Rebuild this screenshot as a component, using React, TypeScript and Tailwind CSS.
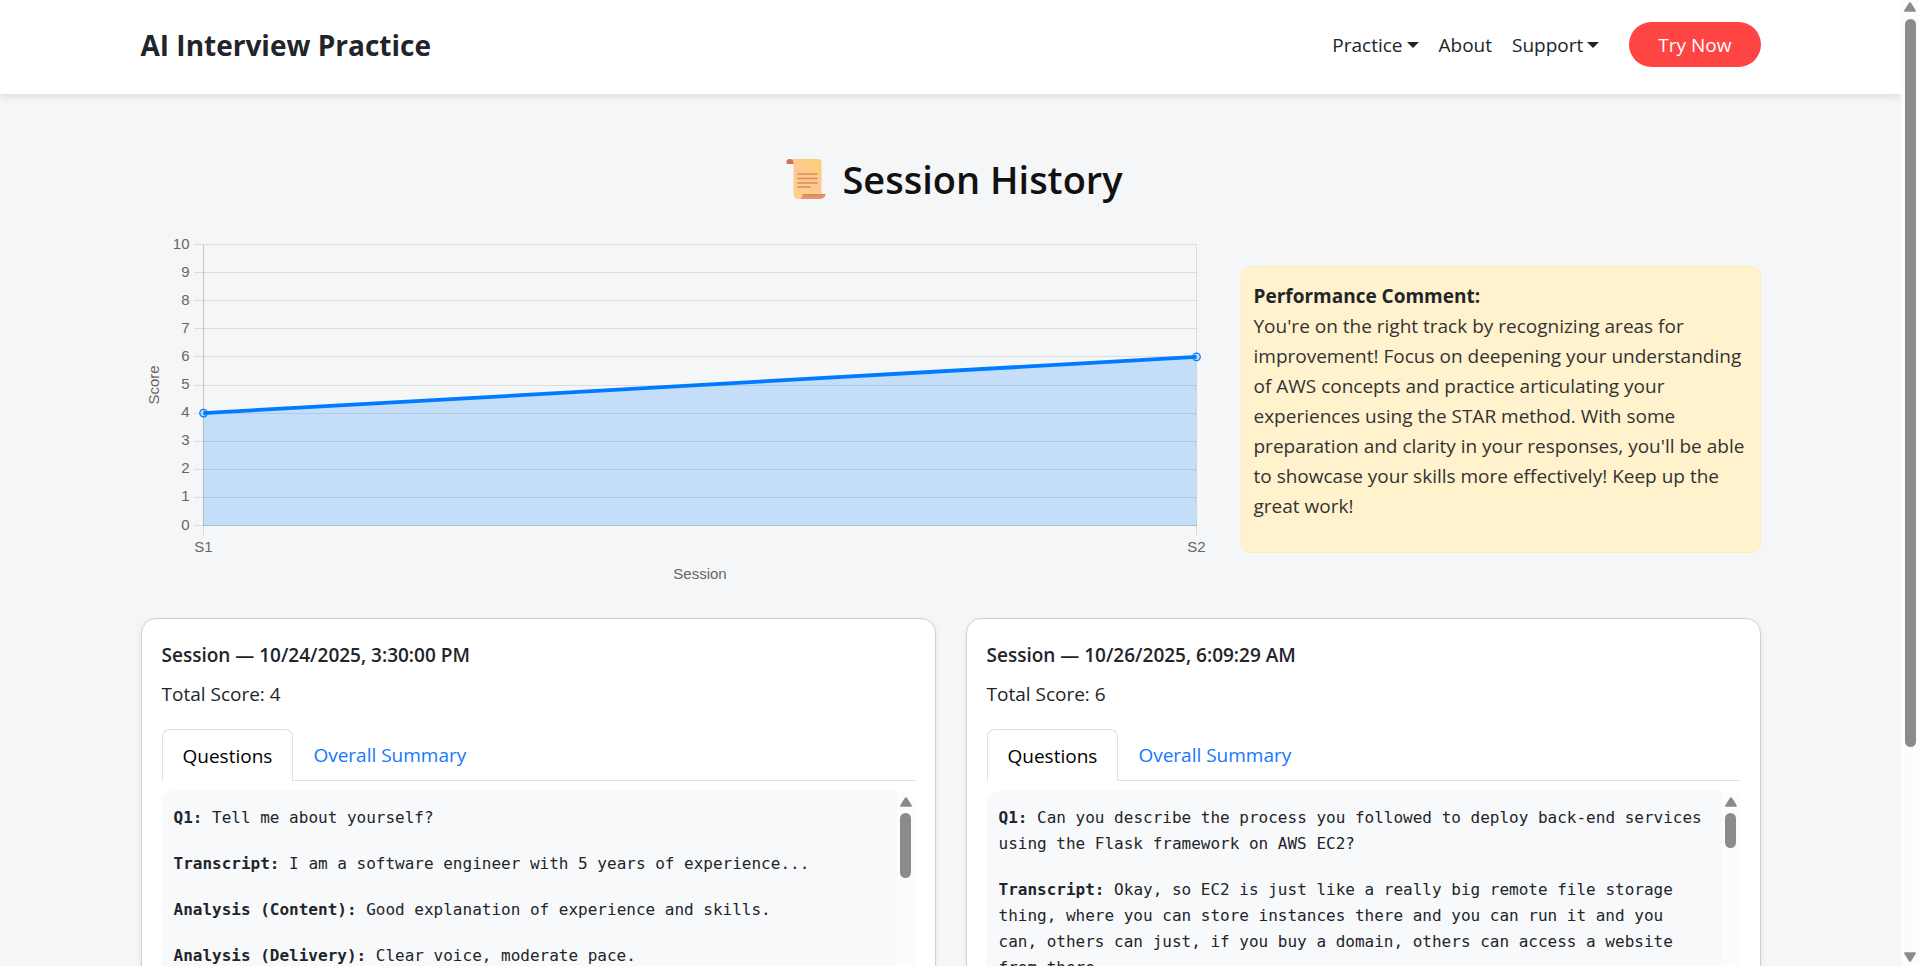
import type { ReactNode } from "react";

type Entry = { label: string; text: string };
type Session = { id: string; date: string; score: number; thumb: string; entries: Entry[] };

const sessions: Session[] = [
  {
    id: "s1",
    date: "10/24/2025, 3:30:00 PM",
    score: 4,
    thumb: "h-[65px]",
    entries: [
      { label: "Q1:", text: "Tell me about yourself?" },
      { label: "Transcript:", text: "I am a software engineer with 5 years of experience..." },
      { label: "Analysis (Content):", text: "Good explanation of experience and skills." },
      { label: "Analysis (Delivery):", text: "Clear voice, moderate pace." },
    ],
  },
  {
    id: "s2",
    date: "10/26/2025, 6:09:29 AM",
    score: 6,
    thumb: "h-[35px]",
    entries: [
      {
        label: "Q1:",
        text: "Can you describe the process you followed to deploy back-end services using the Flask framework on AWS EC2?",
      },
      {
        label: "Transcript:",
        text: "Okay, so EC2 is just like a really big remote file storage thing, where you can store instances there and you can run it and you can, others can just, if you buy a domain, others can access a website from there.",
      },
    ],
  },
];

function Arrow({ down = false }: { down?: boolean }) {
  return (
    <svg viewBox="0 0 12 10" className="h-2.5 w-3 shrink-0 fill-[#8b8b8b]" aria-hidden="true">
      {down ? (
        <path d="M1 0.3h10q1.300 .2.7 1.400L7 9.300q-1 1-2 0L.3 1.700Q-.3.500 1 .3Z" />
      ) : (
        <path d="M1 9.700h10q1.300-.2.7-1.400L7 .7Q6-.3 5 .7L.3 8.300q-.6 1.200.7 1.400Z" />
      )}
    </svg>
  );
}

function Caret() {
  return (
    <svg viewBox="0 0 12 6" className="h-1.5 w-3 fill-[#212529]" aria-hidden="true">
      <path d="M0 0h12L6 6Z" />
    </svg>
  );
}

function ScrollEmoji() {
  return (
    <svg viewBox="0 0 40 40" className="size-10" role="img" aria-label="Scroll">
      <defs>
        <linearGradient id="paper" x1="0.8" y1="0" x2="0.3" y2="1">
          <stop offset="0" stopColor="#ffcf78" />
          <stop offset="0.5" stopColor="#fcc795" />
          <stop offset="1" stopColor="#ffd08a" />
        </linearGradient>
        <linearGradient id="roll" x1="0" y1="0" x2="0" y2="1">
          <stop offset="0" stopColor="#d98a55" />
          <stop offset="1" stopColor="#ee9483" />
        </linearGradient>
      </defs>
      <path d="M0.500 5V3a3 3 0 0 1 3-3H8v5Z" fill="#cf7350" />
      <path d="M3.500 0H32a3.500 3.500 0 0 1 3.500 3.500V37H12a4.500 4.500 0 0 1-4.500-4.500V4a4 4 0 0 0-4-4Z" fill="url(#paper)" />
      <path d="M16.500 35H39.500a5 5 0 0 1-5 5H12c3 0 4.500-2 4.500-5Z" fill="url(#roll)" />
      <path d="M7.500 34v1.500a4.500 4.500 0 0 0 9 0V35h1v-2Z" fill="#ffd084" />
      <path d="M12 15h19M12 19.500h19M12 24h19M12 28h12" stroke="#dc8a57" strokeWidth="1.600" strokeLinecap="round" />
    </svg>
  );
}

const TOP = 8.5;
const STEP = 28.1;
const LEFT = 62.5;
const RIGHT = 1055.5;
const yFor = (v: number) => TOP + (10 - v) * STEP;

function ScoreChart() {
  const ticks = Array.from({ length: 11 }, (_, i) => i);
  return (
    <svg
      viewBox="0 0 1070 347"
      className="block h-auto w-full overflow-visible font-['Liberation_Sans',Arial,sans-serif] text-[15px]"
      role="img"
      aria-label="Score by session"
    >
      <g stroke="#000" strokeOpacity="0.1" shapeRendering="crispEdges">
        {ticks.map((t) => (
          <line key={t} x1={LEFT - 10} x2={RIGHT} y1={Math.floor(yFor(t)) + 0.5} y2={Math.floor(yFor(t)) + 0.5} />
        ))}
        <line x1={LEFT} x2={LEFT} y1={TOP} y2={yFor(0) + 10} />
        <line x1={RIGHT} x2={RIGHT} y1={TOP} y2={yFor(0) + 10} />
        <line x1={LEFT} x2={LEFT} y1={TOP} y2={yFor(0)} />
        <line x1={LEFT} x2={RIGHT} y1={289.5} y2={289.5} />
      </g>
      <path d={`M${LEFT} ${yFor(4)}L${RIGHT} ${yFor(6)}V${yFor(0)}H${LEFT}Z`} fill="#007bff" fillOpacity="0.2" />
      <path d={`M${LEFT} ${yFor(4)}L${RIGHT} ${yFor(6)}`} stroke="#007bff" strokeWidth="3.75" />
      <g fill="#007bff" fillOpacity="0.2" stroke="#007bff" strokeWidth="1.25">
        <circle cx={LEFT} cy={yFor(4)} r="3.75" />
        <circle cx={RIGHT} cy={yFor(6)} r="3.75" />
      </g>
      <g fill="#666">
        {ticks.map((t) => (
          <text key={t} x="48.5" y={yFor(t) + 4} textAnchor="end">
            {t}
          </text>
        ))}
        <text x={LEFT} y="316" textAnchor="middle">S1</text>
        <text x={RIGHT} y="316" textAnchor="middle">S2</text>
        <text x="559" y="343" textAnchor="middle">Session</text>
        <text x="18" y="149" textAnchor="middle" transform="rotate(-90 18 149)">Score</text>
      </g>
    </svg>
  );
}

function NavButton({ children }: { children: ReactNode }) {
  return (
    <button type="button" className="flex items-center gap-1">
      {children}
      <Caret />
    </button>
  );
}

function SessionCard({ session }: { session: Session }) {
  return (
    <article className="min-w-0 rounded-[15px] border border-[#cfd0d2] bg-white p-5 shadow-[0_2px_5px_rgba(0,0,0,0.08)]">
      <h2 className="mt-1 text-[19px] leading-6 font-semibold">Session — {session.date}</h2>
      <p className="mt-3 leading-[30px] text-[#212529]">Total Score: {session.score}</p>
      <div role="tablist" className="mt-5 flex border-b border-[#dee2e6]">
        <button
          type="button"
          role="tab"
          aria-selected="true"
          className="-mb-px h-[52px] rounded-t-lg border border-b-0 border-[#dee2e6] bg-white px-5 text-black"
        >
          Questions
        </button>
        <button
          type="button"
          role="tab"
          aria-selected="false"
          className="-mb-px h-[52px] px-5 text-[#1677ff]"
        >
          Overall Summary
        </button>
      </div>
      <div className="mt-2.5 flex h-[375px] overflow-hidden rounded-[10px] bg-[#f8f9fb]">
        <div className="flex min-w-0 flex-1 flex-col gap-5 pt-3.5 pr-4 pl-3 font-['DejaVu_Sans_Mono','Liberation_Mono',monospace] text-base leading-[26px]">
          {session.entries.map((e) => (
            <p key={e.label}>
              <strong>{e.label}</strong> {e.text}
            </p>
          ))}
        </div>
        <div className="flex w-[18px] shrink-0 flex-col items-center gap-1.5 bg-[#fcfcfc] pt-1.5" aria-hidden="true">
          <Arrow />
          <span className={`w-[11px] rounded-full bg-[#8b8b8b] ${session.thumb}`} />
        </div>
      </div>
    </article>
  );
}

export default function App() {
  return (
    <div className="flex h-screen overflow-hidden bg-[#f5f6f8] font-['Open_Sans','Noto_Sans',sans-serif] text-[19px] leading-[30px] text-[#212529]">
      <div className="min-w-0 flex-1 overflow-hidden">
        <header className="bg-white shadow-[0_2px_8px_rgba(0,0,0,0.12)]">
          <div className="mx-auto flex h-[94px] max-w-[1620px] items-center justify-between pb-[5px]">
            <a href="#home" className="text-[28px] leading-10 font-bold">
              AI Interview Practice
            </a>
            <nav className="flex items-center gap-5">
              <NavButton>Practice</NavButton>
              <a href="#about">About</a>
              <NavButton>Support</NavButton>
              <a href="#try" className="ml-2.5 flex h-[45px] items-center rounded-full bg-[#ff4444] px-[29px] text-white">
                Try Now
              </a>
            </nav>
          </div>
        </header>
        <main className="mx-auto max-w-[1620px]">
          <h1 className="flex items-center justify-center gap-4 pt-[61px] pl-2 text-[38px] leading-12 font-semibold text-[#111]">
            <ScrollEmoji />
            Session History
          </h1>
          <section className="mt-[33px] grid grid-cols-[1070fr_520fr] items-center gap-[30px]">
            <ScoreChart />
            <div className="rounded-[10px] border border-[#ffecb5] bg-[#fff2cd] px-3 pt-3.5 pb-[31px] text-[#333]">
              <strong className="block text-[#212529]">Performance Comment:</strong>
              <p>
                You're on the right track by recognizing areas for improvement! Focus on deepening your understanding of
                AWS concepts and practice articulating your experiences using the STAR method. With some preparation and
                clarity in your responses, you'll be able to showcase your skills more effectively! Keep up the great
                work!
              </p>
            </div>
          </section>
          <section className="mt-[35px] grid grid-cols-2 gap-[30px]">
            {sessions.map((s) => (
              <SessionCard key={s.id} session={s} />
            ))}
          </section>
        </main>
      </div>
      <div className="flex w-[18px] shrink-0 flex-col items-center bg-[#fcfcfc] pt-0.5 pb-1" aria-hidden="true">
        <Arrow />
        <div className="flex w-[11px] flex-1 flex-col pt-[7px]">
          <span className="h-[78%] rounded-full bg-[#8b8b8b]" />
        </div>
        <Arrow down />
      </div>
    </div>
  );
}
